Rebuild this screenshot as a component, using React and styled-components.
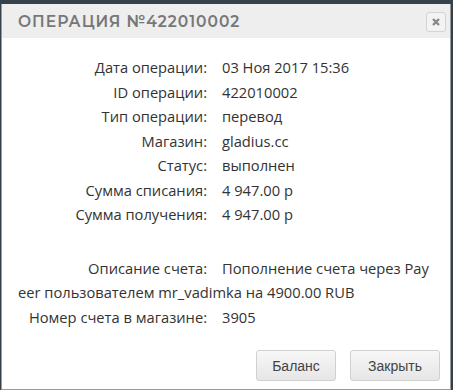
import React from 'react'
import styled, { createGlobalStyle } from 'styled-components'

const Global = createGlobalStyle`
  html, body {
    margin: 0;
    padding: 0;
    background: #36424b;
  }
  body {
    width: 453px;
    height: 390px;
    overflow: hidden;
  }
`

const Dialog = styled.div`
  margin: 4px 0 0 1px;
  width: 450px;
  height: 386px;
  box-sizing: border-box;
  background: #fff;
  border: 1px solid #9a9a9a;
  border-top: none;
  display: flex;
  flex-direction: column;
  font-family: "Open Sans", "Liberation Sans", sans-serif;
`

const TitleBar = styled.div`
  height: 34px;
  background: #eeeeee;
  display: flex;
  align-items: center;
  justify-content: space-between;
  padding: 0 4px 0 16px;
`

const Title = styled.div`
  font-family: "Montserrat", "Noto Sans", "Open Sans", sans-serif;
  font-size: 15.5px;
  font-weight: 600;
  letter-spacing: 1px;
  color: #777;
  text-transform: uppercase;
`

const Close = styled.button`
  width: 20px;
  height: 20px;
  padding: 0;
  border: 1px solid #d4d4d4;
  border-radius: 3px;
  background: #f3f3f3;
  display: flex;
  align-items: center;
  justify-content: center;
  margin-top: 1px;
`

const Content = styled.div`
  flex: 1;
  padding: 17px 16px 0 16px;
  font-size: 14.7px;
  line-height: 24.5px;
  color: #333;
`

const Row = styled.div`
  margin-top: ${props => props.$gap ? '29px' : '0'};
  word-break: break-all;
`

const Label = styled.span`
  display: inline-block;
  width: 189px;
  margin-right: 15px;
  text-align: right;
  word-break: normal;
  white-space: nowrap;
`

const Footer = styled.div`
  display: flex;
  justify-content: flex-end;
  gap: 14px;
  padding: 0 10px 8px 0;
`

const Button = styled.button`
  height: 31px;
  padding: 0 ${props => props.$wide ? '16px' : '14px'};
  min-width: ${props => props.$wide ? '90px' : '80px'};
  border: 1px solid #d0d0d0;
  border-radius: 3px;
  background: linear-gradient(#f7f7f7, #e6e6e6);
  font-family: "Liberation Sans", Arial, sans-serif;
  font-size: 14px;
  color: #444;
`

const rows = [
  ['Дата операции:', '03 Ноя 2017 15:36'],
  ['ID операции:', '422010002'],
  ['Тип операции:', 'перевод'],
  ['Магазин:', 'gladius.cc'],
  ['Статус:', 'выполнен'],
  ['Сумма списания:', '4 947.00 р'],
  ['Сумма получения:', '4 947.00 р'],
]

const App = () => {
  return (
    <>
      <Global />
      <Dialog>
        <TitleBar>
          <Title>Операция №422010002</Title>
          <Close>
            <svg width="10" height="10" viewBox="0 0 10 10">
              <path d="M2 2 L8 8 M8 2 L2 8" stroke="#888" strokeWidth="2.4" />
            </svg>
          </Close>
        </TitleBar>
        <Content>
          {rows.map(r => (
            <Row key={r[0]}>
              <Label>{r[0]}</Label>{r[1]}
            </Row>
          ))}
          <Row $gap>
            <Label>Описание счета:</Label>Пополнение счета через Payeer пользователем mr_vadimka на 4900.00 RUB
          </Row>
          <Row>
            <Label>Номер счета в магазине:</Label>3905
          </Row>
        </Content>
        <Footer>
          <Button>Баланс</Button>
          <Button $wide>Закрыть</Button>
        </Footer>
      </Dialog>
    </>
  )
}

export default App
